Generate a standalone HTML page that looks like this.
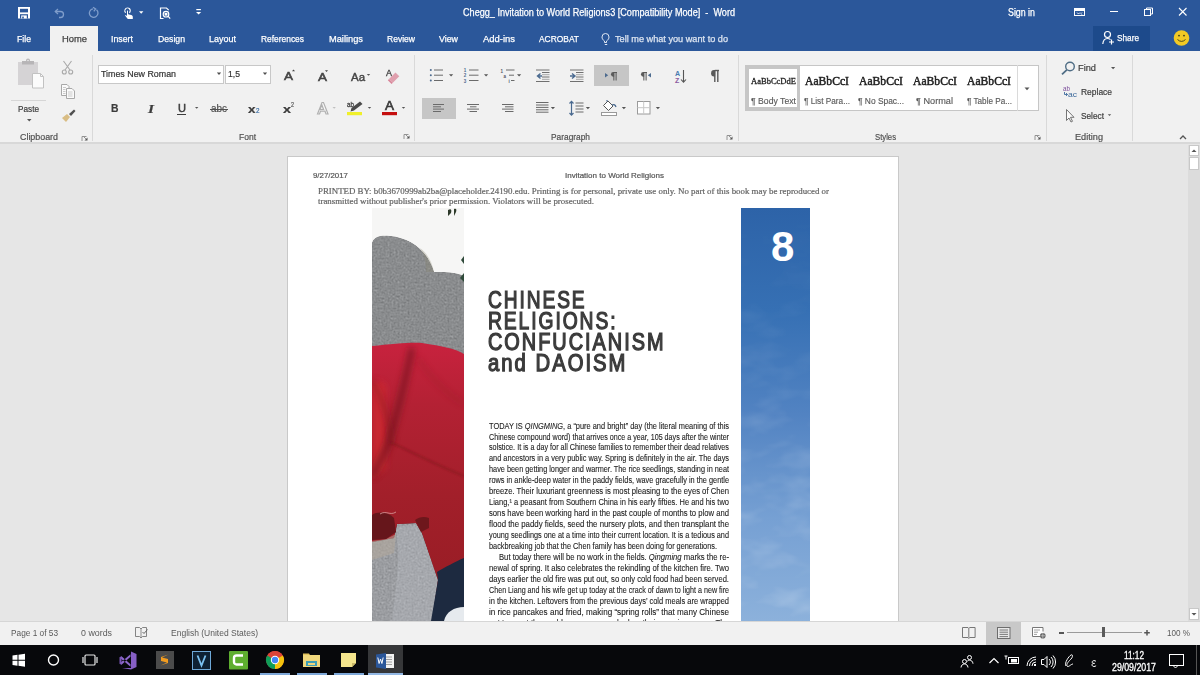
<!DOCTYPE html>
<html><head><meta charset="utf-8">
<style>
*{margin:0;padding:0;box-sizing:border-box}
html,body{width:1200px;height:675px;overflow:hidden;background:#e6e6e6;font-family:"Liberation Sans",sans-serif;position:relative}
.a{position:absolute;white-space:nowrap;line-height:1}
svg{position:absolute;overflow:visible}
.tab{-webkit-text-stroke-width:0.25px;position:absolute;top:34.4px;font-size:9.5px;color:#fff;white-space:nowrap;line-height:1}
.gl{-webkit-text-stroke-width:0.2px;position:absolute;top:132.2px;font-size:9.5px;color:#505050;white-space:nowrap;line-height:1}
.sep{position:absolute;top:55px;width:1px;height:86px;background:#d9d9d9}
.rt{-webkit-text-stroke-width:0.2px;position:absolute;margin-top:0.4px;font-size:9.5px;color:#3c3c3c;white-space:nowrap;line-height:1}
.st{-webkit-text-stroke-width:0.15px;position:absolute;font-size:9.5px;color:#595959;white-space:nowrap;line-height:1}
.bl{position:absolute;left:489px;width:240px;font-size:8.4px;color:#222;-webkit-text-stroke:0.1px #222;white-space:nowrap;line-height:1;font-family:"Liberation Sans",sans-serif}
.hd{position:absolute;left:488px;font-size:23px;font-weight:normal;-webkit-text-stroke:1.25px #3b3b3b;color:#3b3b3b;letter-spacing:2.3px;white-space:nowrap;line-height:1}
</style></head><body>
<!-- title bar -->
<div class="a" style="left:0;top:0;width:1200px;height:51px;background:#2b579a"></div>
<div class="a" style="left:50px;top:26px;width:48px;height:25px;background:#f1f1f1"></div>
<!-- save -->
<svg style="left:0;top:0" width="1" height="1"><path d="M18 7h12v11.5h-12z" fill="#fff"/><rect x="20" y="8.8" width="8" height="3.6" fill="#2b579a"/><rect x="20" y="14.2" width="8" height="4.3" fill="#2b579a"/><rect x="21.2" y="15.4" width="5.6" height="3.1" fill="#fff"/><rect x="22.2" y="16.6" width="1.6" height="1.9" fill="#2b579a"/></svg>
<!-- undo -->
<svg style="left:0;top:0" width="1" height="1"><g fill="none" stroke="#7f9dcb" stroke-width="1.3"><path d="M55.5 11.5h5a3 3 0 0 1 0 6h-1.5"/><path d="M58 9l-2.7 2.5 2.7 2.5"/></g></svg>
<!-- redo -->
<svg style="left:0;top:0" width="1" height="1"><g fill="none" stroke="#7f9dcb" stroke-width="1.3"><path d="M96.5 9.8a4.3 4.3 0 1 1-3.5-1"/><path d="M93 7.2l2.6 1.8-1.8 2.4"/></g></svg>
<!-- touch -->
<svg style="left:0;top:0" width="1" height="1"><g fill="#fff"><path d="M127.5 7.5a3.3 3.3 0 0 1 3.3 3.3 3.3 3.3 0 0 1-1.2 2.5l-0.6-1a2.2 2.2 0 1 0-3 0l-0.6 1a3.3 3.3 0 0 1 2.1-5.8z"/><path d="M127 10.3c.6 0 1 .4 1 1v3l3.2.7c1 .2 1.6 1 1.6 2V19h-5l-2.8-3.5.7-.6 1.3 1v-4.6c0-.6.4-1 1-1z"/></g></svg>
<svg style="left:0;top:0" width="1" height="1"><path d="M139 11.3h4.4l-2.2 2.4z" fill="#fff"/></svg>
<!-- print preview -->
<svg style="left:0;top:0" width="1" height="1"><g fill="none" stroke="#fff" stroke-width="1.2"><path d="M163.5 18.5h-3v-10.5h6l2.2 2.2"/><circle cx="166" cy="14.2" r="2.8"/><path d="M168 16.2l2.2 2.5"/></g><rect x="164.6" y="12.8" width="2.8" height="2.8" fill="#fff"/></svg>
<!-- customize -->
<svg style="left:0;top:0" width="1" height="1"><rect x="196.3" y="9" width="4.6" height="1.2" fill="#fff"/><path d="M196 12h5.2l-2.6 2.6z" fill="#fff"/></svg>
<div class="a" style="transform:scaleX(0.8940);transform-origin:0 0;left:463px;top:7.5px;font-size:10.2px;color:#fff;-webkit-text-stroke-width:0.25px">Chegg_ Invitation to World Religions3 [Compatibility Mode]&nbsp; -&nbsp; Word</div>
<div class="a" style="transform:scaleX(0.8666);transform-origin:0 0;left:1008px;top:7.5px;font-size:10.2px;color:#fff;-webkit-text-stroke-width:0.25px">Sign in</div>
<!-- ribbon display options -->
<svg style="left:0;top:0" width="1" height="1"><g fill="none" stroke="#fff" stroke-width="1"><rect x="1074.5" y="8.5" width="10" height="7"/></g><rect x="1075" y="9" width="9" height="2" fill="#fff"/><path d="M1077 12.5l1.5 1.5 1.5-1.5M1082 12.5l-1 1.2 1 1" fill="none" stroke="#fff" stroke-width="0.9"/></svg>
<!-- minimize -->
<div class="a" style="left:1110px;top:11px;width:8px;height:1px;background:#fff"></div>
<!-- restore -->
<svg style="left:0;top:0" width="1" height="1"><g fill="none" stroke="#fff" stroke-width="1"><rect x="1144.5" y="9.5" width="6" height="6"/><path d="M1146.5 9.5v-1.5h6v6h-1.8"/></g></svg>
<!-- close -->
<svg style="left:0;top:0" width="1" height="1"><path d="M1179 8l7.5 7.5M1186.5 8l-7.5 7.5" stroke="#fff" stroke-width="1.1"/></svg>

<!-- tabs -->
<div class="tab" style="transform:scaleX(0.9143);transform-origin:0 0;left:17px">File</div>
<div class="tab" style="transform:scaleX(0.9864);transform-origin:0 0;left:62px;color:#444">Home</div>
<div class="tab" style="transform:scaleX(0.9257);transform-origin:0 0;left:111px">Insert</div>
<div class="tab" style="transform:scaleX(0.9128);transform-origin:0 0;left:157.5px">Design</div>
<div class="tab" style="transform:scaleX(0.9463);transform-origin:0 0;left:209px">Layout</div>
<div class="tab" style="transform:scaleX(0.8849);transform-origin:0 0;left:261px">References</div>
<div class="tab" style="transform:scaleX(0.9753);transform-origin:0 0;left:328.5px">Mailings</div>
<div class="tab" style="transform:scaleX(0.8987);transform-origin:0 0;left:387px">Review</div>
<div class="tab" style="transform:scaleX(0.9304);transform-origin:0 0;left:439px">View</div>
<div class="tab" style="transform:scaleX(0.9932);transform-origin:0 0;left:483px">Add-ins</div>
<div class="tab" style="transform:scaleX(0.8846);transform-origin:0 0;left:539px">ACROBAT</div>
<svg style="left:0;top:0" width="1" height="1"><g fill="none" stroke="#dfe7f3" stroke-width="1"><path d="M604.5 42.5v-1.5c-1.6-1-2.5-2.4-2.5-4a3.5 3.5 0 0 1 7 0c0 1.6-.9 3-2.5 4v1.5z"/><path d="M604.8 44.5h2.4"/></g></svg>
<div class="tab" style="transform:scaleX(0.9639);transform-origin:0 0;left:615px;color:#dde5f1">Tell me what you want to do</div>
<div class="a" style="left:1093px;top:26px;width:57px;height:25px;background:#1d4a8b"></div>
<svg style="left:0;top:0" width="1" height="1"><g fill="none" stroke="#fff" stroke-width="1.2"><circle cx="1107.5" cy="34.5" r="3"/><path d="M1102.8 44c.3-3.4 2.2-5.5 4.7-5.5 1.2 0 2.2.4 3 1.1"/><path d="M1111.5 39.5v5M1109 42h5"/></g></svg>
<div class="tab" style="transform:scaleX(0.8675);transform-origin:0 0;left:1117px;top:33px">Share</div>
<svg style="left:0;top:0" width="1" height="1"><circle cx="1181.5" cy="38" r="7.8" fill="#f2c925"/><circle cx="1179" cy="35.6" r="0.9" fill="#3a3a1a"/><circle cx="1184" cy="35.6" r="0.9" fill="#3a3a1a"/><path d="M1177.5 39.5q4 3.8 8 0" fill="none" stroke="#3a3a1a" stroke-width="0.9"/></svg>
<!-- ribbon -->
<div class="a" style="left:0;top:51px;width:1200px;height:92px;background:#f1f1f1"></div>
<div class="a" style="left:0;top:142px;width:1200px;height:2px;background:#d8d8d8"></div>
<div class="sep" style="left:92px"></div>
<div class="sep" style="left:414px"></div>
<div class="sep" style="left:738px"></div>
<div class="sep" style="left:1046px"></div>
<div class="sep" style="left:1132px"></div>
<div class="gl" style="transform:scaleX(0.9343);transform-origin:0 0;left:20px">Clipboard</div>
<div class="gl" style="transform:scaleX(0.8940);transform-origin:0 0;left:239px">Font</div>
<div class="gl" style="transform:scaleX(0.8789);transform-origin:0 0;left:551px">Paragraph</div>
<div class="gl" style="transform:scaleX(0.8116);transform-origin:0 0;left:875px">Styles</div>
<div class="gl" style="transform:scaleX(0.9634);transform-origin:0 0;left:1075px">Editing</div>
<!-- launchers -->
<svg style="left:0;top:0" width="1" height="1"><g fill="none" stroke="#8a8a8a" stroke-width="0.9"><path d="M86.5 136.5h-4.5v4.5"/><path d="M83.5 136.5l3.5 3.5"/></g><path d="M84.5 140.5h3v-3z" fill="#555"/></svg>
<svg style="left:0;top:0" width="1" height="1"><g fill="none" stroke="#8a8a8a" stroke-width="0.9"><path d="M408.5 134.5h-4.5v4.5"/><path d="M405.5 134.5l3.5 3.5"/></g><path d="M406.5 138.5h3v-3z" fill="#555"/></svg>
<svg style="left:0;top:0" width="1" height="1"><g fill="none" stroke="#8a8a8a" stroke-width="0.9"><path d="M731.5 135.5h-4.5v4.5"/><path d="M728.5 135.5l3.5 3.5"/></g><path d="M729.5 139.5h3v-3z" fill="#555"/></svg>
<svg style="left:0;top:0" width="1" height="1"><g fill="none" stroke="#8a8a8a" stroke-width="0.9"><path d="M1039.5 135.5h-4.5v4.5"/><path d="M1036.5 135.5l3.5 3.5"/></g><path d="M1037.5 139.5h3v-3z" fill="#555"/></svg>
<!-- clipboard group -->
<svg style="left:0;top:0" width="1" height="1">
<rect x="18" y="62" width="20" height="23" fill="#d5d3d5"/>
<rect x="22" y="61" width="12" height="3.5" fill="#b7b5b7"/>
<circle cx="28" cy="60.5" r="2" fill="#b7b5b7"/><circle cx="28" cy="60.5" r="0.8" fill="#eee"/>
<path d="M32.5 73.5h8l3 3v11.5h-11z" fill="#fbfbfb" stroke="#c2c2c2"/>
<path d="M40.5 73.5v3h3" fill="none" stroke="#c2c2c2"/>
</svg>
<div class="a" style="left:11px;top:100px;width:35px;height:1px;background:#d6d6d6"></div>
<div class="rt" style="transform:scaleX(0.8643);transform-origin:0 0;left:18px;top:104px">Paste</div>
<svg style="left:0;top:0" width="1" height="1"><path d="M27 119h4.5l-2.25 2.5z" fill="#555"/></svg>
<svg style="left:0;top:0" width="1" height="1"><g fill="none" stroke="#a9a9a9" stroke-width="1.1"><path d="M63.5 61l6.5 9M71.5 61l-6.5 9"/><circle cx="64.3" cy="72" r="2"/><circle cx="70.7" cy="72" r="2"/></g></svg>
<svg style="left:0;top:0" width="1" height="1"><g fill="#fafafa" stroke="#a8a8a8" stroke-width="1"><path d="M61.5 84.5h5.5l2 2v9h-7.5z"/><path d="M66.5 88.5h5.5l2.5 2.5v7.5h-8z"/></g><g stroke="#b5b5b5" stroke-width="0.7"><path d="M63 87.5h3M63 89.5h2.5M63 91.5h2.5M63 93.5h2.5M68 92h4.5M68 94h4.5M68 96h4.5"/></g></svg>
<svg style="left:0;top:0" width="1" height="1"><path d="M69 114l5-4.5 1.5 1.5-4.5 5z" fill="#505050"/><path d="M62 118l5-4 3 3-4 5z" fill="#d9bd84"/></svg>
<!-- font group -->
<div class="a" style="left:98px;top:65px;width:126px;height:19px;background:#fff;border:1px solid #c8c8c8"></div>
<div class="a" style="left:225px;top:65px;width:46px;height:19px;background:#fff;border:1px solid #c8c8c8"></div>
<div class="rt" style="transform:scaleX(0.9326);transform-origin:0 0;left:101px;top:69px;font-size:9.5px;color:#333">Times New Roman</div>
<div class="rt" style="transform:scaleX(0.9078);transform-origin:0 0;left:228px;top:69px;font-size:9.5px;color:#333">1,5</div>
<svg style="left:0;top:0" width="1" height="1"><path d="M216.8 72.5h4.4l-2.2 2.4zM262.8 72.5h4.4l-2.2 2.4z" fill="#505050"/></svg>
<div class="rt" style="transform:scaleX(1.1731);transform-origin:0 0;left:284px;top:71px;font-size:11.5px;color:#444;-webkit-text-stroke:0.5px #444">A</div>
<svg style="left:0;top:0" width="1" height="1"><path d="M292 71.2l1.5-1.7 1.5 1.7z" fill="#444"/><path d="M325 70.2h3l-1.5 1.7z" fill="#444"/></svg>
<div class="rt" style="transform:scaleX(1.1731);transform-origin:0 0;left:318px;top:72px;font-size:11.5px;color:#444;-webkit-text-stroke:0.5px #444">A</div>
<div class="rt" style="transform:scaleX(1.0900);transform-origin:0 0;left:351px;top:72px;font-size:10.5px;color:#444;-webkit-text-stroke:0.4px #444">Aa</div>
<svg style="left:0;top:0" width="1" height="1"><path d="M366.8 74h3.4l-1.7 1.8z" fill="#555"/></svg>
<div class="rt" style="transform:scaleX(1.0579);transform-origin:0 0;left:385.5px;top:68.5px;font-size:8.5px;color:#444;-webkit-text-stroke:0.3px #444">A</div>
<svg style="left:0;top:0" width="1" height="1"><path d="M389 79l6.5-6.5 3.8 3.8-6.5 6.5z" fill="#e0a0ae"/><path d="M389 79l3.8 3.8-1.2 1.2-3.8-3.8z" fill="#d9869a"/></svg>
<div class="rt" style="transform:scaleX(0.9023);transform-origin:0 0;left:111px;top:103px;font-size:11.5px;font-weight:bold;color:#3c3c3c">B</div>
<div class="rt" style="transform:scaleX(1.2843);transform-origin:0 0;left:147.5px;top:103px;font-size:12px;font-style:italic;font-weight:bold;font-family:'Liberation Serif',serif;color:#3c3c3c">I</div>
<div class="rt" style="transform:scaleX(1.0059);transform-origin:0 0;left:177.5px;top:103px;font-size:11px;color:#3c3c3c;-webkit-text-stroke:0.5px #3c3c3c">U</div>
<div class="a" style="left:177px;top:114px;width:9px;height:1px;background:#3c3c3c"></div>
<svg style="left:0;top:0" width="1" height="1"><path d="M195 107h3.4l-1.7 1.8z" fill="#555"/></svg>
<div class="rt" style="transform:scaleX(0.9922);transform-origin:0 0;left:211px;top:104px;font-size:10px;color:#505050">abc</div>
<div class="a" style="left:210px;top:109px;width:18px;height:1px;background:#505050"></div>
<div class="rt" style="transform:scaleX(1.1707);transform-origin:0 0;left:248px;top:104px;font-size:11.5px;font-weight:bold;color:#3c3c3c">x</div>
<div class="rt" style="transform:scaleX(0.9655);transform-origin:0 0;left:256px;top:108px;font-size:6.5px;color:#3b6ea5">2</div>
<div class="rt" style="transform:scaleX(1.2488);transform-origin:0 0;left:282.5px;top:104px;font-size:11.5px;font-weight:bold;color:#3c3c3c">x</div>
<div class="rt" style="transform:scaleX(0.8276);transform-origin:0 0;left:291px;top:101.5px;font-size:6.5px;color:#555">2</div>
<svg style="left:0;top:0" width="1" height="1"><path d="M317.5 114l4.5-11.5h1.5l4.5 11.5h-2l-1-2.8h-4.5l-1 2.8zM320 109.5h3.6l-1.8-4.8z" fill="#fafafa" stroke="#b0b0b0" stroke-width="1.2"/><path d="M332.5 107h3.4l-1.7 1.8z" fill="#c0c0c0"/></svg>
<div class="rt" style="transform:scaleX(0.8390);transform-origin:0 0;left:347px;top:100.5px;font-size:7.5px;color:#444;-webkit-text-stroke:0.3px #444">ab</div>
<svg style="left:0;top:0" width="1" height="1"><path d="M350.5 111.5l1-3.5 8.5-6.5 2.5 2.5-8.5 6.5z" fill="#4a4a4a"/><rect x="347" y="112" width="15" height="3.2" fill="#f0f02a"/><path d="M367.8 107h3.4l-1.7 1.8z" fill="#555"/></svg>
<div class="rt" style="transform:scaleX(1.0787);transform-origin:0 0;left:384.5px;top:100px;font-size:12.5px;color:#3a3a3a;-webkit-text-stroke:0.6px #3a3a3a">A</div>
<svg style="left:0;top:0" width="1" height="1"><rect x="382" y="112" width="15" height="3.2" fill="#c50f0f"/><path d="M401.8 107h3.4l-1.7 1.8z" fill="#555"/></svg>
<!-- paragraph group -->
<svg style="left:0;top:0" width="1" height="1">
<g fill="#4d6b8f"><circle cx="430.8" cy="70" r="1"/><circle cx="430.8" cy="75.2" r="1"/><circle cx="430.8" cy="80.5" r="1"/></g>
<g stroke="#6a6a6a" stroke-width="1"><path d="M434 70h9M434 75.2h9M434 80.5h9"/></g>
<path d="M449 74.3h4.2l-2.1 2.2z" fill="#555"/>
<g fill="#4d6b8f" font-size="4.5" font-family="Liberation Sans" font-weight="bold"><text x="463.8" y="72">1</text><text x="463.8" y="77.2">2</text><text x="463.8" y="82.5">3</text></g>
<g stroke="#6a6a6a" stroke-width="1"><path d="M469 70h9.5M469 75.2h9.5M469 80.5h9.5"/></g>
<path d="M484 74.3h4.2l-2.1 2.2z" fill="#555"/>
<g fill="#556" font-size="4.5" font-family="Liberation Sans" font-weight="bold"><text x="500.5" y="72.5">1</text><text x="503.5" y="77.5">a</text><text x="508.5" y="82.5">i</text></g>
<g stroke="#6a6a6a" stroke-width="1"><path d="M506 70h8.5M509 75.2h5M511 80.5h3.5"/></g>
<path d="M517 74.3h4.2l-2.1 2.2z" fill="#555"/>
<!-- decrease indent -->
<g stroke="#707070" stroke-width="1"><path d="M536 70h13.5M542 72.5h7.5M542 77h7.5M536 81.5h13.5"/></g>
<g stroke="#a8a8a8" stroke-width="1"><path d="M542 74.7h7.5M542 79.3h7.5"/></g>
<path d="M540.5 73.5l-3 2.5 3 2.5M537.5 76h4.5" fill="none" stroke="#4a6a90" stroke-width="1.4"/>
<g stroke="#707070" stroke-width="1"><path d="M570 70h13.5M576 72.5h7.5M576 77h7.5M570 81.5h13.5"/></g>
<g stroke="#a8a8a8" stroke-width="1"><path d="M576 74.7h7.5M576 79.3h7.5"/></g>
<path d="M572 73.5l3 2.5-3 2.5M570 76h4.5" fill="none" stroke="#4a6a90" stroke-width="1.4"/>
</svg>
<div class="a" style="left:594px;top:65px;width:35px;height:21px;background:#c6c6c6"></div>
<svg style="left:0;top:0" width="1" height="1">
<path d="M605 73l3.2 2.3-3.2 2.3z" fill="#4d6b8f"/>
<path d="M613.85 72.50H617.00" stroke="#5a5a5a" stroke-width="1.05"/><path d="M613.85 72.50V80.50M616.10 72.50V80.50" stroke="#5a5a5a" stroke-width="1.05"/><path d="M614.15 72.00H613.21A2.06 2.16 0 0 0 613.21 76.66H614.15z" fill="#5a5a5a"/>
<path d="M651 73l-3.2 2.3 3.2 2.3z" fill="#4d6b8f"/>
<path d="M643.85 72.50H647.00" stroke="#5a5a5a" stroke-width="1.05"/><path d="M643.85 72.50V80.50M646.10 72.50V80.50" stroke="#5a5a5a" stroke-width="1.05"/><path d="M644.15 72.00H643.21A2.06 2.16 0 0 0 643.21 76.66H644.15z" fill="#5a5a5a"/>
<text x="675" y="76" font-size="7" font-weight="bold" font-family="Liberation Sans" fill="#4a7ab0">A</text>
<text x="675" y="83" font-size="7" font-weight="bold" font-family="Liberation Sans" fill="#8a5aa0">Z</text>
<path d="M683.5 70v12M681 79.5l2.5 2.7 2.5-2.7" fill="none" stroke="#555" stroke-width="1.1"/>
<path d="M714.80 70.50H719.00" stroke="#5a5a5a" stroke-width="1.40"/><path d="M714.80 70.50V82.00M717.80 70.50V82.00" stroke="#5a5a5a" stroke-width="1.40"/><path d="M715.10 70.00H713.95A2.75 3.11 0 0 0 713.95 76.48H715.10z" fill="#5a5a5a"/>
</svg>
<!-- row2 -->
<div class="a" style="left:422px;top:97.5px;width:34px;height:21px;background:#c6c6c6"></div>
<svg style="left:0;top:0" width="1" height="1">
<g stroke="#6a6a6a" stroke-width="1">
<path d="M433 104.5h11M433 106.8h8M433 109.1h11M433 111.5h8"/>
<path d="M467 104.5h12M470 106.8h6.5M467 109.1h12M469.5 111.5h7.5"/>
<path d="M502 104.5h11.5M505 106.8h8.5M502 109.1h11.5M505 111.5h8.5"/>
<path d="M536 102.5h12.5M536 105h12.5M536 107.4h12.5M536 109.8h12.5M536 112.2h12.5"/>
<path d="M575.5 103h8M575.5 106h8M575.5 109h8M575.5 112h8"/>
</g>
<path d="M550.8 107h4.2l-2.1 2.2zM585.8 107h4.2l-2.1 2.2zM621.8 107h4.2l-2.1 2.2zM655.8 107h4.2l-2.1 2.2z" fill="#555"/>
<path d="M571.5 101.5v13.5M569.5 103.5l2-2.2 2 2.2M569.5 113l2 2.2 2-2.2" fill="none" stroke="#4a6a90" stroke-width="1.2"/>
<path d="M603.5 105.5l4.5-4.5 5 5-4.5 4.5z" fill="#fff" stroke="#555" stroke-width="1"/>
<path d="M607 101.5v-1.5M612 105c2-1 3.5 0 4 2" fill="none" stroke="#4a6a90" stroke-width="1.2"/>
<rect x="601.5" y="112.5" width="15" height="3" fill="#fff" stroke="#999" stroke-width="1"/>
<rect x="637.5" y="101.5" width="12.5" height="12.5" fill="#fff" stroke="#9a9a9a" stroke-width="1"/>
<path d="M643.7 101.5v12.5M637.5 107.7h12.5" stroke="#c8c8c8" stroke-width="1"/>
</svg>
<!-- styles gallery -->
<div class="a" style="left:745px;top:65px;width:294px;height:46px;background:#fff;border:1px solid #c6c6c6"></div>
<div class="a" style="left:1017px;top:65px;width:1px;height:46px;background:#dadada"></div>
<div class="a" style="left:746px;top:66px;width:54px;height:44px;border:3px solid #c6c6c6"></div>
<svg style="left:0;top:0" width="1" height="1"><path d="M1024.5 87.5h5l-2.5 2.7z" fill="#555"/></svg>
<div class="a" style="transform:scaleX(0.9474);transform-origin:0 0;left:751px;top:77px;font-size:9px;font-family:'Liberation Serif',serif;font-weight:normal;-webkit-text-stroke:0.3px #222;color:#222">AaBbCcDdE</div>
<div class="a" style="transform:scaleX(0.9318);transform-origin:0 0;left:805px;top:74.5px;font-size:12.5px;font-family:'Liberation Serif',serif;font-weight:normal;-webkit-text-stroke:0.5px #222;color:#222">AaBbCcI</div>
<div class="a" style="transform:scaleX(0.9318);transform-origin:0 0;left:859px;top:74.5px;font-size:12.5px;font-family:'Liberation Serif',serif;font-weight:normal;-webkit-text-stroke:0.5px #222;color:#222">AaBbCcI</div>
<div class="a" style="transform:scaleX(0.9318);transform-origin:0 0;left:913px;top:74.5px;font-size:12.5px;font-family:'Liberation Serif',serif;font-weight:normal;-webkit-text-stroke:0.5px #222;color:#222">AaBbCcI</div>
<div class="a" style="transform:scaleX(0.9318);transform-origin:0 0;left:967px;top:74.5px;font-size:12.5px;font-family:'Liberation Serif',serif;font-weight:normal;-webkit-text-stroke:0.5px #222;color:#222">AaBbCcI</div>
<div class="st" style="transform:scaleX(0.9128);transform-origin:0 0;left:751px;top:96px">¶ Body Text</div>
<div class="st" style="transform:scaleX(0.8654);transform-origin:0 0;left:804px;top:96px">¶ List Para...</div>
<div class="st" style="transform:scaleX(0.8828);transform-origin:0 0;left:858px;top:96px">¶ No Spac...</div>
<div class="st" style="transform:scaleX(0.9646);transform-origin:0 0;left:916px;top:96px">¶ Normal</div>
<div class="st" style="transform:scaleX(0.8577);transform-origin:0 0;left:967px;top:96px">¶ Table Pa...</div>
<!-- editing -->
<svg style="left:0;top:0" width="1" height="1"><circle cx="1070" cy="66.5" r="4.3" fill="none" stroke="#4f6d85" stroke-width="1.4"/><path d="M1066.8 69.8l-4.8 4.5" stroke="#4f6d85" stroke-width="1.8"/></svg>
<div class="rt" style="transform:scaleX(0.9738);transform-origin:0 0;left:1078px;top:62.5px">Find</div>
<svg style="left:0;top:0" width="1" height="1"><path d="M1111 67h4.2l-2.1 2.2zM1107.8 114.2h3.4l-1.7 1.8z" fill="#555"/></svg>
<div class="a" style="transform:scaleX(0.8978);transform-origin:0 0;left:1063px;top:85px;font-size:7px;color:#7a4c9a">ab</div>
<div class="a" style="transform:scaleX(1.1361);transform-origin:0 0;left:1068px;top:91px;font-size:7.5px;color:#3d6a9c">ac</div>
<svg style="left:0;top:0" width="1" height="1"><path d="M1064.5 92v2.5h3M1066 93l1.5 1.5-1.5 1.5" fill="none" stroke="#3d6a9c" stroke-width="0.9"/></svg>
<div class="rt" style="transform:scaleX(0.8893);transform-origin:0 0;left:1081px;top:87px">Replace</div>
<svg style="left:0;top:0" width="1" height="1"><path d="M1066.5 109.5v11l2.5-2.5 2 4 1.5-.7-2-4h3.5z" fill="#fafafa" stroke="#666" stroke-width="0.9"/></svg>
<div class="rt" style="transform:scaleX(0.8710);transform-origin:0 0;left:1081px;top:111px">Select</div>
<svg style="left:0;top:0" width="1" height="1"><path d="M1180 139l3-3 3 3" fill="none" stroke="#555" stroke-width="1.3"/></svg>
<!-- document -->
<div class="a" style="left:287px;top:156px;width:612px;height:465px;background:#fff;border:1px solid #c9c9c9;border-bottom:none"></div>
<!-- scrollbar -->
<div class="a" style="left:1188px;top:145px;width:12px;height:476px;background:#dcdcdc"></div>
<div class="a" style="left:1189px;top:145px;width:10px;height:11px;background:#fff;border:1px solid #c8c8c8"></div>
<div class="a" style="left:1189px;top:157px;width:10px;height:13px;background:#fff;border:1px solid #c8c8c8"></div>
<div class="a" style="left:1189px;top:608px;width:10px;height:12px;background:#fff;border:1px solid #c8c8c8"></div>
<svg style="left:0;top:0" width="1" height="1"><path d="M1191.5 152l2.5-2.5 2.5 2.5z" fill="#555"/><path d="M1191.5 613h5l-2.5 2.5z" fill="#555"/></svg>
<!-- header -->
<div class="a" style="transform:scaleX(0.9833);transform-origin:0 0;left:313px;top:171.8px;font-size:8px;color:#555;-webkit-text-stroke-width:0.2px">9/27/2017</div>
<div class="a" style="transform:scaleX(0.9998);transform-origin:0 0;left:565px;top:171.8px;font-size:8px;color:#555;-webkit-text-stroke-width:0.2px">Invitation to World Religions</div>
<div class="a" style="transform:scaleX(1.1065);transform-origin:0 0;left:318px;top:188.3px;font-size:8px;font-family:'Liberation Serif',serif;color:#666;-webkit-text-stroke-width:0.2px">PRINTED BY: b0b3670999ab2ba@placeholder.24190.edu. Printing is for personal, private use only. No part of this book may be reproduced or</div>
<div class="a" style="transform:scaleX(1.1074);transform-origin:0 0;left:318px;top:198.3px;font-size:8px;font-family:'Liberation Serif',serif;color:#666;-webkit-text-stroke-width:0.2px">transmitted without publisher's prior permission. Violators will be prosecuted.</div>
<!-- photo -->
<svg style="left:372px;top:208px;overflow:hidden" width="92" height="413" viewBox="0 0 92 413">
<defs>
<filter id="gran" x="0" y="0" width="100%" height="100%" color-interpolation-filters="sRGB">
<feTurbulence type="fractalNoise" baseFrequency="0.5" numOctaves="2" seed="3" result="n"/>
<feGaussianBlur in="n" stdDeviation="0.5" result="nb"/><feColorMatrix in="nb" type="matrix" values="0.33 0.33 0.33 0 0  0.33 0.33 0.33 0 0  0.33 0.33 0.33 0 0  0 0 0 0 1" result="g"/>
<feComposite in="g" in2="SourceGraphic" operator="arithmetic" k1="0" k2="0.35" k3="1" k4="-0.175" result="c"/>
<feComposite in="c" in2="SourceGraphic" operator="in"/>
</filter>
<linearGradient id="red" x1="0" y1="0" x2="0" y2="1"><stop offset="0" stop-color="#c8223e"/><stop offset="0.22" stop-color="#b42134"/><stop offset="0.55" stop-color="#a21f2a"/><stop offset="1" stop-color="#951c23"/></linearGradient><filter id="bl3" x="-50%" y="-50%" width="200%" height="200%"><feGaussianBlur stdDeviation="3"/></filter><filter id="bl1" x="-50%" y="-50%" width="200%" height="200%"><feGaussianBlur stdDeviation="1"/></filter>
</defs>
<rect width="92" height="413" fill="#f6f6f5"/>
<g filter="url(#gran)">
<path d="M0 35C2 28 10 27 18 28C40 30 56 44 62 64C72 64 84 64 92 68V160H0z" fill="#8a8c8e"/>
</g>
<path d="M48 40C56 46 60 54 62 64L54 64C54 54 52 46 48 40z" fill="#8a8870" opacity="0.3"/>
<path d="M0 138C20 136 40 134 50 135C70 138 84 141 92 146V413H0z" fill="url(#red)"/>
<path d="M0 175C4 172 12 172 14 180L14 260 0 270z" fill="#d32a32" opacity="0.7" filter="url(#bl3)"/>
<path d="M40 140C34 170 24 210 16 236C10 250 4 262 0 268" stroke="#6a121a" stroke-width="7" fill="none" opacity="0.6" filter="url(#bl3)"/>
<path d="M0 172C10 190 18 214 20 236" stroke="#7a151d" stroke-width="4" fill="none" opacity="0.5" filter="url(#bl3)"/>
<path d="M18 234C40 244 66 258 92 268" stroke="#7a151d" stroke-width="1.5" fill="none" opacity="0.6" filter="url(#bl1)"/>
<path d="M46 150C58 170 80 190 92 196" stroke="#8e1a24" stroke-width="3" fill="none" opacity="0.4" filter="url(#bl3)"/>
<g filter="url(#gran)">
<path d="M0 334L22 330 25 316 44 315 50 325 66 372 60 413H0z" fill="#9b9da1"/>
</g>
<path d="M25 318L44 317 50 326 66 372 60 413 20 413C24 380 28 350 25 332z" fill="#c8ccd2" opacity="0.25"/><path d="M0 333L14 331 24 326 25 318 22 345 0 352z" fill="#b5aa9c" opacity="0.55"/>
<path d="M0 307C6 303 16 304 22 310L24 324 14 331 0 332z" fill="#66161b"/>
<path d="M43 312C47 309 52 308 57 310L57 320 49 324z" fill="#6e171c"/>
<path d="M8 306c6-4 10 2 16-2" stroke="#d9a0a0" stroke-width="0.8" fill="none"/>
<path d="M65 364C72 360 84 353 92 350V413H59L66 372z" fill="#1d2a40"/>
<path d="M72 413C74 404 82 399 92 399V413z" fill="#e6eaee"/>
<path d="M76 2c3-2 4 0 3 3l-3 3zM82 1c2-1 3 0 2 3l-2 4z" fill="#2d3a2a"/>
<path d="M89 52l3-4v8zM88 70l4-5v9z" fill="#2f4a3a"/>
</svg>
<!-- blue strip -->
<svg style="left:741px;top:208px;overflow:hidden" width="69" height="413" viewBox="0 0 69 413">
<defs>
<linearGradient id="sky" x1="0" y1="0" x2="0" y2="1"><stop offset="0" stop-color="#2d63a8"/><stop offset="0.25" stop-color="#3670b4"/><stop offset="0.5" stop-color="#5283c2"/><stop offset="0.75" stop-color="#76a0d3"/><stop offset="1" stop-color="#8cb1db"/></linearGradient>
<filter id="cl" x="0" y="0" width="100%" height="100%" color-interpolation-filters="sRGB"><feTurbulence type="fractalNoise" baseFrequency="0.025 0.05" numOctaves="3" seed="5"/><feColorMatrix type="matrix" values="0 0 0 0 1  0 0 0 0 1  0 0 0 0 1  0 0 0 0.7 -0.3"/></filter>
<linearGradient id="fade" x1="0" y1="0" x2="0" y2="1"><stop offset="0" stop-color="#fff" stop-opacity="0"/><stop offset="0.4" stop-color="#fff" stop-opacity="0.25"/><stop offset="1" stop-color="#fff" stop-opacity="0.6"/></linearGradient>
<mask id="fm"><rect width="69" height="413" fill="url(#fade)"/></mask>
</defs>
<rect width="69" height="413" fill="url(#sky)"/>
<rect width="69" height="413" fill="#000" filter="url(#cl)" mask="url(#fm)"/>
</svg>
<div class="a" style="left:771px;top:226px;font-size:42px;font-weight:bold;color:#fff">8</div>
<!-- heading -->
<div class="hd" style="transform:scaleX(0.8323);transform-origin:0 0;top:288.8px">CHINESE</div>
<div class="hd" style="transform:scaleX(0.8373);transform-origin:0 0;top:310px">RELIGIONS:</div>
<div class="hd" style="transform:scaleX(0.8649);transform-origin:0 0;top:331.2px">CONFUCIANISM</div>
<div class="hd" style="transform:scaleX(0.8801);transform-origin:0 0;top:352.4px">and DAOISM</div>
<!-- body -->
<div class="bl" style="transform:scaleX(0.8843);transform-origin:0 0;top:421.5px">TODAY IS <i>QINGMING</i>, a “pure and bright” day (the literal meaning of this</div>
<div class="bl" style="transform:scaleX(0.8535);transform-origin:0 0;top:432.5px">Chinese compound word) that arrives once a year, 105 days after the winter</div>
<div class="bl" style="transform:scaleX(0.8636);transform-origin:0 0;top:443.4px">solstice. It is a day for all Chinese families to remember their dead relatives</div>
<div class="bl" style="transform:scaleX(0.8793);transform-origin:0 0;top:454.4px">and ancestors in a very public way. Spring is definitely in the air. The days</div>
<div class="bl" style="transform:scaleX(0.8742);transform-origin:0 0;top:465.3px">have been getting longer and warmer. The rice seedlings, standing in neat</div>
<div class="bl" style="transform:scaleX(0.8782);transform-origin:0 0;top:476.3px">rows in ankle-deep water in the paddy fields, wave gracefully in the gentle</div>
<div class="bl" style="transform:scaleX(0.9162);transform-origin:0 0;top:487.3px">breeze. Their luxuriant greenness is most pleasing to the eyes of Chen</div>
<div class="bl" style="transform:scaleX(0.8935);transform-origin:0 0;top:498.2px">Liang,¹ a peasant from Southern China in his early fifties. He and his two</div>
<div class="bl" style="transform:scaleX(0.9172);transform-origin:0 0;top:509.2px">sons have been working hard in the past couple of months to plow and</div>
<div class="bl" style="transform:scaleX(0.9355);transform-origin:0 0;top:520.1px">flood the paddy fields, seed the nursery plots, and then transplant the</div>
<div class="bl" style="transform:scaleX(0.8707);transform-origin:0 0;top:531.1px">young seedlings one at a time into their current location. It is a tedious and</div>
<div class="bl" style="transform:scaleX(0.8760);transform-origin:0 0;top:542.1px">backbreaking job that the Chen family has been doing for generations.</div>
<div class="bl" style="transform:scaleX(0.9166);transform-origin:0 0;top:553.0px;left:499px">But today there will be no work in the fields. <i>Qingming</i> marks the re-</div>
<div class="bl" style="transform:scaleX(0.9146);transform-origin:0 0;top:564.0px">newal of spring. It also celebrates the rekindling of the kitchen fire. Two</div>
<div class="bl" style="transform:scaleX(0.9075);transform-origin:0 0;top:574.9px">days earlier the old fire was put out, so only cold food had been served.</div>
<div class="bl" style="transform:scaleX(0.8549);transform-origin:0 0;top:585.9px">Chen Liang and his wife get up today at the crack of dawn to light a new fire</div>
<div class="bl" style="transform:scaleX(0.8945);transform-origin:0 0;top:596.9px">in the kitchen. Leftovers from the previous days’ cold meals are wrapped</div>
<div class="bl" style="transform:scaleX(0.9691);transform-origin:0 0;top:607.8px">in rice pancakes and fried, making “spring rolls” that many Chinese</div>
<div class="bl" style="transform:scaleX(0.9378);transform-origin:0 0;top:618.8px">eat to greet the world anew, now packed up their ongoing ovens. The</div>
<!-- status bar -->
<div class="a" style="left:0;top:621px;width:1200px;height:24px;background:#f1f1f1;border-top:1px solid #d6d6d6"></div>
<div class="a" style="transform:scaleX(0.8721);transform-origin:0 0;left:10.5px;top:628px;font-size:9.5px;color:#5a5a5a">Page 1 of 53</div>
<div class="a" style="transform:scaleX(0.9319);transform-origin:0 0;left:81px;top:628px;font-size:9.5px;color:#5a5a5a">0 words</div>
<svg style="left:0;top:0" width="1" height="1"><path d="M135.5 627.5h4l1.5 1.5 1.5-1.5h4v9h-4l-1.5 1.5-1.5-1.5h-4z" fill="none" stroke="#777" stroke-width="0.9"/><path d="M141 629v8" stroke="#777" stroke-width="0.8"/><path d="M142.5 632l1.5 1.5 3.5-4" fill="none" stroke="#666" stroke-width="1"/></svg>
<div class="a" style="transform:scaleX(0.8953);transform-origin:0 0;left:171px;top:628px;font-size:9.5px;color:#5a5a5a">English (United States)</div>
<!-- view buttons -->
<svg style="left:0;top:0" width="1" height="1"><path d="M962.5 627.5h5.5l.8 1 .8-1h5.5v10h-5.5l-.8 1-.8-1h-5.5z" fill="none" stroke="#777" stroke-width="1"/><path d="M968.8 628.5v9" stroke="#777" stroke-width="1"/></svg>
<div class="a" style="left:986px;top:622px;width:35px;height:23px;background:#c8c8c8"></div>
<svg style="left:0;top:0" width="1" height="1"><rect x="997.5" y="627.5" width="12.5" height="11" fill="#e8e8e8" stroke="#6d6d6d" stroke-width="1"/><path d="M999.5 630h8.5M999.5 632.2h8.5M999.5 634.4h8.5M999.5 636.6h8.5" stroke="#6d6d6d" stroke-width="0.9"/></svg>
<svg style="left:0;top:0" width="1" height="1"><path d="M1041.5 636.5h-9v-9h10.5v4" fill="#fff" stroke="#777" stroke-width="1"/><path d="M1034 630h6M1034 632.2h4M1034 634.4h3" stroke="#888" stroke-width="0.8"/><circle cx="1042.8" cy="635.8" r="2.8" fill="#666"/><path d="M1040.5 635.8h4.6M1042.8 633.2v5.2" stroke="#ddd" stroke-width="0.6"/></svg>
<div class="a" style="left:1059px;top:632px;width:4.5px;height:1.5px;background:#555"></div>
<div class="a" style="left:1067px;top:632px;width:75px;height:1px;background:#9a9a9a"></div>
<div class="a" style="left:1102px;top:627px;width:3px;height:10px;background:#5a5a5a"></div>
<svg style="left:0;top:0" width="1" height="1"><path d="M1144.2 632.7h5.6M1147 629.9v5.6" stroke="#555" stroke-width="1.5"/></svg>
<div class="a" style="transform:scaleX(0.8538);transform-origin:0 0;left:1167px;top:628px;font-size:9.5px;color:#5a5a5a">100 %</div>
<!-- taskbar -->
<div class="a" style="left:0;top:645px;width:1200px;height:30px;background:#07080b"></div>
<svg style="left:0;top:0" width="1" height="1">
<path d="M12.5 655.5l5-.7v5h-5zM18.5 654.7l6.5-.9v6h-6.5zM12.5 660.7h5v5l-5-.7zM18.5 660.7h6.5v6l-6.5-.9z" fill="#fff"/>
<circle cx="53.5" cy="660" r="5" fill="none" stroke="#fff" stroke-width="1.4"/>
<rect x="85" y="655" width="10" height="10" rx="1" fill="none" stroke="#e8e8e8" stroke-width="1.2"/>
<path d="M83 657v6M97 657v6" stroke="#e8e8e8" stroke-width="1.2"/>
<path d="M131 651.5l5.5 2.5v13l-5.5 2.5-9-1.5 9 0z" fill="#865fc5"/>
<path d="M119.5 657.5l2-1.2 9 8v2.5zM119.5 663.5l2 1.2 9-8v-2.5z" fill="#8e69cc"/>
<path d="M119.5 657.5v6l2 1.2v-8.4z" fill="#7a55b8"/>
<rect x="156" y="651" width="18" height="18" fill="#4b4b4b"/>
<path d="M168.5 654.5l-7.5 2.5v4l6 1.5-6.5 3v0l7.5-2.5v-4l-6-1.5z" fill="#f39c1f"/>
<rect x="192.5" y="651.5" width="18" height="18" fill="#0e2134" stroke="#6ea8d8" stroke-width="1"/>
<path d="M197.5 655.5l4 10 4-10" fill="none" stroke="#7ac0f0" stroke-width="1.8"/>
<rect x="229" y="651" width="19" height="18.5" rx="1" fill="#5eae2f"/>
<path d="M243 655.5h-6.5a2.5 2.5 0 0 0-2.5 2.5v4a2.5 2.5 0 0 0 2.5 2.5h6.5" fill="none" stroke="#fff" stroke-width="2.4"/>
<circle cx="275" cy="660" r="9" fill="#db4437"/>
<path d="M275 660L267.2 655.5A9 9 0 0 1 282.8 655.5z" fill="#db4437"/>
<path d="M275 660L282.8 655.5A9 9 0 0 1 275 669z" fill="#f4c20d"/>
<path d="M275 660L275 669A9 9 0 0 1 267.2 655.5z" fill="#0f9d58"/>
<circle cx="275" cy="660" r="4.2" fill="#fff"/><circle cx="275" cy="660" r="3.2" fill="#4285f4"/>
<rect x="303" y="655" width="17" height="12" fill="#f0d77c"/>
<path d="M303 655v-1.5h6l1 1.5z" fill="#e3c35c"/>
<rect x="306" y="661" width="11" height="5" fill="#3e9fb6"/>
<rect x="308" y="663" width="7" height="2" fill="#f0d77c"/>
<path d="M341 653h15v10l-4 4h-11z" fill="#f4e58c"/>
<path d="M352 667v-4h4z" fill="#c9b867"/>
</svg>
<div class="a" style="left:368px;top:645px;width:35px;height:30px;background:#363739"></div>
<svg style="left:0;top:0" width="1" height="1">
<rect x="383" y="654" width="11" height="14" fill="#f3f3f3"/>
<path d="M385 657h7M385 659.5h7M385 662h7M385 664.5h7" stroke="#8a8a8a" stroke-width="0.8"/>
<path d="M376 654.5l10-1.5v16l-10-1.5z" fill="#2b579a"/>
<path d="M377.8 657.5l1.3 6 1.4-4.5 1.4 4.5 1.3-6" fill="none" stroke="#fff" stroke-width="1"/>
</svg>
<div class="a" style="left:260px;top:673px;width:30px;height:2px;background:#7ea8d8"></div>
<div class="a" style="left:297px;top:673px;width:30px;height:2px;background:#7ea8d8"></div>
<div class="a" style="left:334px;top:673px;width:30px;height:2px;background:#7ea8d8"></div>
<div class="a" style="left:368px;top:673px;width:35px;height:2px;background:#93b8e4"></div>
<!-- tray -->
<svg style="left:0;top:0" width="1" height="1">
<g fill="none" stroke="#fff" stroke-width="1">
<circle cx="964.5" cy="661.5" r="2"/><path d="M961 667.5c.3-2.3 1.6-3.5 3.5-3.5s3.2 1.2 3.5 3.5"/>
<circle cx="969.5" cy="657.5" r="2"/><path d="M967.2 661.3c.7-.8 1.4-1.1 2.3-1.1 1.9 0 3.2 1.2 3.5 3.5"/>
<path d="M989.5 663l4.5-4.5 4.5 4.5" stroke-width="1.2"/>
<rect x="1008.5" y="657.5" width="10" height="6"/>
<path d="M1006 656v3.5M1004.5 656h3" />
<path d="M1027 666a9 9 0 0 1 9-9M1029.5 666a6.5 6.5 0 0 1 6.5-6.5M1032 666a4 4 0 0 1 4-4" stroke-width="1"/>
<path d="M1041.5 659.5h2.5l3-3v11l-3-3h-2.5z"/>
<path d="M1049 659a4 4 0 0 1 0 6M1051 657a7 7 0 0 1 0 10M1053 655.5a9.5 9.5 0 0 1 0 13"/>
<path d="M1066 666c-2-3 3-10 5-11s2 2 0 4-5 5-4 7 4-2 6-2"/>
<rect x="1169.5" y="654.5" width="14" height="11"/>
</g>
<rect x="1011" y="659" width="6" height="3.5" fill="#fff"/>
<rect x="1034" y="664" width="2" height="2" fill="#fff"/>
<path d="M1173 665.5l2.5 2.5 2.5-2.5z" fill="#07080b" stroke="#fff" stroke-width="1"/>
</svg>
<svg style="left:0;top:0" width="1" height="1"><path d="M1096 661.3c-.6-.5-1.3-.7-2-.7-1.1 0-1.8.7-1.8 1.5s.7 1.3 1.6 1.3h.7M1094.5 663.4h-.7c-1 0-1.8.6-1.8 1.5s.8 1.6 2 1.6c.8 0 1.5-.3 2.1-.8" fill="none" stroke="#fff" stroke-width="1"/></svg>
<div class="a" style="transform:scaleX(0.8232);transform-origin:0 0;left:1124px;top:650.5px;font-size:10px;color:#fff;-webkit-text-stroke:0.3px #fff">11:12</div>
<div class="a" style="transform:scaleX(0.8789);transform-origin:0 0;left:1112px;top:663.3px;font-size:10px;color:#fff;-webkit-text-stroke:0.3px #fff">29/09/2017</div>
<div class="a" style="left:1196px;top:645px;width:1px;height:30px;background:#555"></div>
</body></html>
